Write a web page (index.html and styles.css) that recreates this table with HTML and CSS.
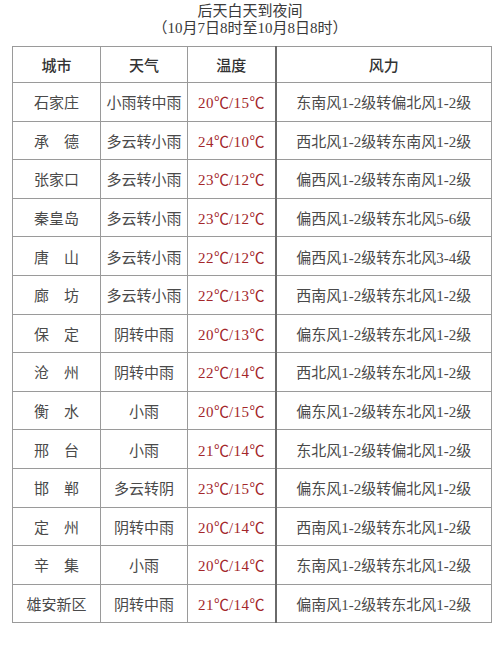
FILE: index.html
```html
<!DOCTYPE html>
<html lang="zh">
<head>
<meta charset="utf-8">
<link rel="stylesheet" href="styles.css">
</head>
<body>
<div class="page">
  <div class="title">
    <div>后天白天到夜间</div>
    <div>（10月7日8时至10月8日8时）</div>
  </div>
  <table class="weather">
    <colgroup>
      <col class="c-city"><col class="c-wx"><col class="c-temp"><col class="c-wind">
    </colgroup>
    <thead>
      <tr><th>城市</th><th>天气</th><th>温度</th><th class="v2">风力</th></tr>
    </thead>
    <tbody>
      <tr><td>石家庄</td><td>小雨转中雨</td><td class="temp">20<span class="deg">℃</span>/15<span class="deg">℃</span></td><td class="v2">东南风1-2级转偏北风1-2级</td></tr>
      <tr><td>承　德</td><td>多云转小雨</td><td class="temp">24<span class="deg">℃</span>/10<span class="deg">℃</span></td><td class="v2">西北风1-2级转东南风1-2级</td></tr>
      <tr><td>张家口</td><td>多云转小雨</td><td class="temp">23<span class="deg">℃</span>/12<span class="deg">℃</span></td><td class="v2">偏西风1-2级转东南风1-2级</td></tr>
      <tr><td>秦皇岛</td><td>多云转小雨</td><td class="temp">23<span class="deg">℃</span>/12<span class="deg">℃</span></td><td class="v2">偏西风1-2级转东北风5-6级</td></tr>
      <tr><td>唐　山</td><td>多云转小雨</td><td class="temp">22<span class="deg">℃</span>/12<span class="deg">℃</span></td><td class="v2">偏西风1-2级转东北风3-4级</td></tr>
      <tr><td>廊　坊</td><td>多云转小雨</td><td class="temp">22<span class="deg">℃</span>/13<span class="deg">℃</span></td><td class="v2">西南风1-2级转东北风1-2级</td></tr>
      <tr><td>保　定</td><td>阴转中雨</td><td class="temp">20<span class="deg">℃</span>/13<span class="deg">℃</span></td><td class="v2">偏东风1-2级转东北风1-2级</td></tr>
      <tr><td>沧　州</td><td>阴转中雨</td><td class="temp">22<span class="deg">℃</span>/14<span class="deg">℃</span></td><td class="v2">西北风1-2级转东北风1-2级</td></tr>
      <tr><td>衡　水</td><td>小雨</td><td class="temp">20<span class="deg">℃</span>/15<span class="deg">℃</span></td><td class="v2">偏东风1-2级转东北风1-2级</td></tr>
      <tr><td>邢　台</td><td>小雨</td><td class="temp">21<span class="deg">℃</span>/14<span class="deg">℃</span></td><td class="v2">东北风1-2级转偏北风1-2级</td></tr>
      <tr><td>邯　郸</td><td>多云转阴</td><td class="temp">23<span class="deg">℃</span>/15<span class="deg">℃</span></td><td class="v2">偏东风1-2级转偏北风1-2级</td></tr>
      <tr><td>定　州</td><td>阴转中雨</td><td class="temp">20<span class="deg">℃</span>/14<span class="deg">℃</span></td><td class="v2">西南风1-2级转东北风1-2级</td></tr>
      <tr><td>辛　集</td><td>小雨</td><td class="temp">20<span class="deg">℃</span>/14<span class="deg">℃</span></td><td class="v2">东南风1-2级转东北风1-2级</td></tr>
      <tr><td>雄安新区</td><td>阴转中雨</td><td class="temp">21<span class="deg">℃</span>/14<span class="deg">℃</span></td><td class="v2">偏南风1-2级转东北风1-2级</td></tr>
    </tbody>
  </table>
</div>
</body>
</html>
```

FILE: styles.css
```css
html, body {
  margin: 0;
  padding: 0;
  background: #ffffff;
}
.page {
  width: 500px;
  height: 646px;
  font-family: "Liberation Serif", "Noto Sans CJK SC", serif;
  color: #4a4a4a;
  font-size: 15px;
}
.title {
  padding-top: 3px;
  text-align: center;
  line-height: 17px;
  color: #3a3a3a;
}
.weather {
  margin: 9px 0 0 12px;
  width: 479px;
  border-collapse: collapse;
  table-layout: fixed;
}
.c-city { width: 88px; }
.c-wx { width: 87px; }
.c-temp { width: 88px; }
.c-wind { width: 216px; }
.weather th, .weather td {
  border: 1px solid #9a9a9a;
  text-align: center;
  padding: 0;
  white-space: nowrap;
}
.weather th {
  height: 35px;
  font-weight: 500;
  color: #333;
}
.weather td {
  height: 37.6px;
}
.weather .v2 {
  border-left: 2px solid #6a6a6a;
}
.weather td.temp {
  color: #a3262a;
  letter-spacing: 0.5px;
}
.deg {
  font-family: "Noto Sans CJK SC", sans-serif;
  letter-spacing: 0;
}
```
